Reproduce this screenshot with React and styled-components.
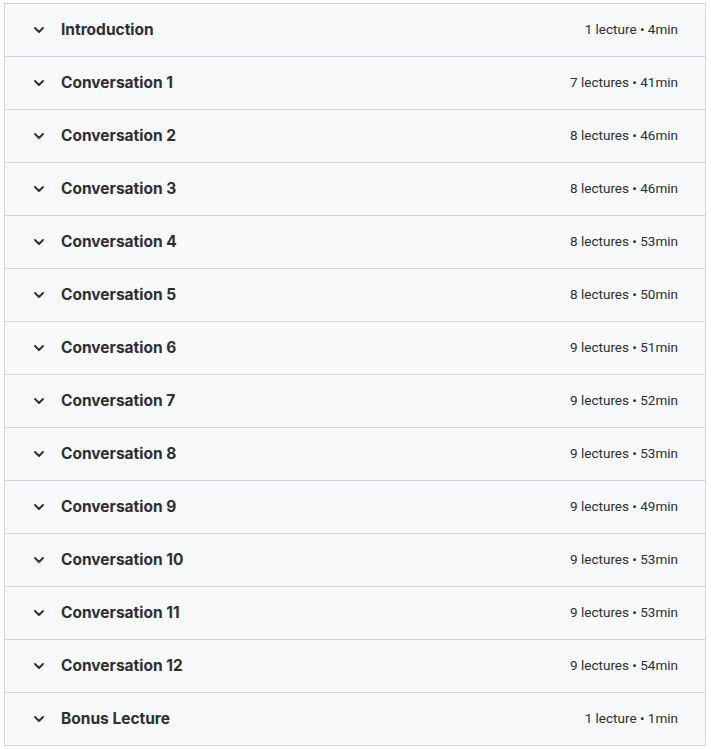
import React from 'react';
import styled, { createGlobalStyle } from 'styled-components';

const GlobalStyle = createGlobalStyle`
  body {
    margin: 0;
    background: #fff;
    font-family: Roboto, "Liberation Sans", sans-serif;
    color: #2d2f31;
  }
`

const Curriculum = styled.div`
  margin: 3px 0 0 4px;
  width: 700px;
  border: 1px solid #d1d7dc;
  border-bottom: none;
`

const Section = styled.div`
  display: flex;
  align-items: center;
  height: 52px;
  padding: 0 27px 0 26px;
  background: #f7f9fa;
  border-bottom: 1px solid #d1d7dc;
`

const Chevron = styled.svg`
  width: 16px;
  height: 16px;
  margin-right: 14px;
  flex-shrink: 0;
`

const Title = styled.span`
  flex: 1;
  font-family: Inter, Roboto, sans-serif;
  font-size: 15.5px;
  font-weight: 700;
  line-height: 1;
  margin-top: -1px;
`

const Meta = styled.span`
  font-size: 13.5px;
  line-height: 1;
  margin-top: -1px;
  color: #2d2f31;
`

const sections = [
  ['Introduction', '1 lecture', '4min'],
  ['Conversation 1', '7 lectures', '41min'],
  ['Conversation 2', '8 lectures', '46min'],
  ['Conversation 3', '8 lectures', '46min'],
  ['Conversation 4', '8 lectures', '53min'],
  ['Conversation 5', '8 lectures', '50min'],
  ['Conversation 6', '9 lectures', '51min'],
  ['Conversation 7', '9 lectures', '52min'],
  ['Conversation 8', '9 lectures', '53min'],
  ['Conversation 9', '9 lectures', '49min'],
  ['Conversation 10', '9 lectures', '53min'],
  ['Conversation 11', '9 lectures', '53min'],
  ['Conversation 12', '9 lectures', '54min'],
  ['Bonus Lecture', '1 lecture', '1min'],
]

const App = () => {
  return (
    <>
      <GlobalStyle />
      <Curriculum>
        {sections.map(([title, count, time]) => (
          <Section key={title}>
            <Chevron viewBox="0 0 24 24" fill="none" stroke="#2d2f31" strokeWidth="2.8" strokeLinecap="round" strokeLinejoin="round">
              <path d="M6 9l6 6 6-6" />
            </Chevron>
            <Title>{title}</Title>
            <Meta>{count} • {time}</Meta>
          </Section>
        ))}
      </Curriculum>
    </>
  )
}

export default App
